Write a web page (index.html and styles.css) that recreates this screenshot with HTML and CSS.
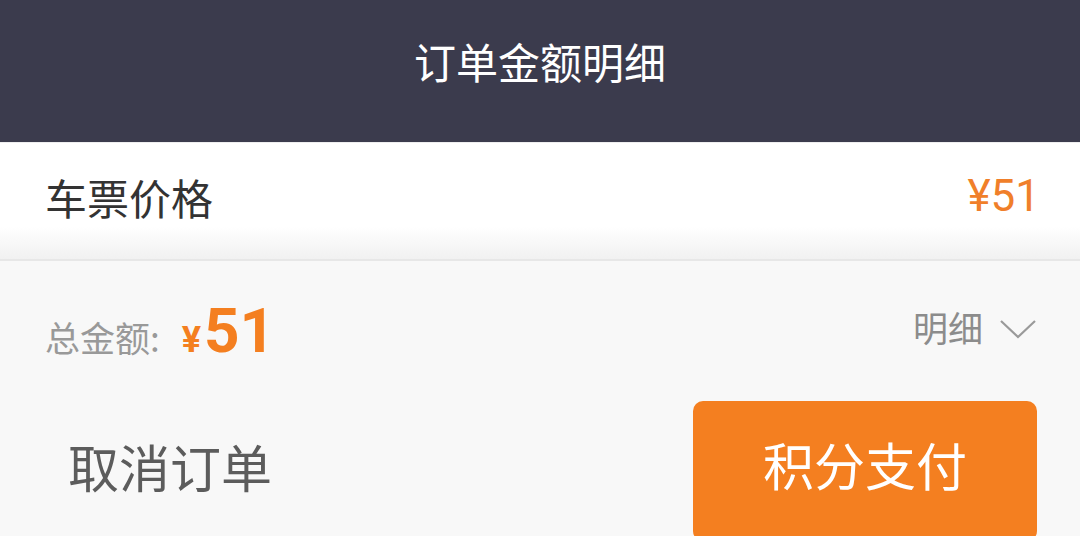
FILE: index.html
```html
<!DOCTYPE html>
<html lang="zh-CN">
<head>
    <meta charset="UTF-8">
    <meta name="viewport" content="width=device-width, initial-scale=1.0">
    <title>订单金额明细</title>
    <link rel="stylesheet" href="styles.css">
</head>
<body>
    <div class="title-bar">订单金额明细</div>

    <div class="price-row">
        <span class="price-label">车票价格</span>
        <span class="price-value">¥51</span>
    </div>

    <div class="footer">
        <div class="total-row">
            <div class="total">
                <span class="total-label">总金额:</span>
                <span class="total-yen">¥</span><span class="total-num">51</span>
            </div>
            <div class="detail-toggle">
                <span>明细</span>
                <!-- chevron down -->
                <svg class="chevron" width="38" height="20" viewBox="0 0 38 20">
                    <polyline points="2,2 19,18 36,2" fill="none" stroke="#9a9a9a" stroke-width="2.2"/>
                </svg>
            </div>
        </div>

        <div class="actions">
            <button class="cancel-btn">取消订单</button>
            <button class="pay-btn">积分支付</button>
        </div>
    </div>
</body>
</html>
```

FILE: styles.css
```css
body {
    margin: 0;
    height: 536px;
    overflow: hidden;
    font-family: "Noto Sans CJK SC", "Noto Sans", sans-serif;
    background-color: #f8f8f8;
}
.title-bar {
    height: 143px;
    display: flex;
    align-items: center;
    justify-content: center;
    background-color: #3b3b4d;
    color: #fff;
    font-size: 42px;
    border-bottom: 1px solid #eeeeef;
    padding-bottom: 22px;
    box-sizing: border-box;
}
.price-row {
    height: 118px;
    display: flex;
    align-items: center;
    justify-content: space-between;
    padding: 0 40px 10px 45px;
    box-sizing: border-box;
    background: linear-gradient(#fff 72%, #f1f1f1);
    border-bottom: 2px solid #e7e7e7;
}
.price-label {
    font-size: 42px;
    color: #333;
}
.price-value {
    font-family: Roboto, sans-serif;
    font-size: 44px;
    color: #f07f2a;
}
.footer {
    background-color: #f8f8f8;
}
.total-row {
    height: 140px;
    display: flex;
    align-items: center;
    justify-content: space-between;
    padding: 0 43px 0 45px;
}
.total {
    display: flex;
    align-items: baseline;
}
.total-label {
    font-size: 35px;
    color: #999;
    margin-right: 22px;
}
.total-yen {
    font-family: Roboto, sans-serif;
    font-weight: bold;
    font-size: 36px;
    color: #f47f20;
    margin-right: 3px;
}
.total-num {
    font-family: Roboto, sans-serif;
    font-weight: bold;
    font-size: 62px;
    line-height: 1;
    color: #f47f20;
}
.detail-toggle {
    display: flex;
    align-items: center;
    font-size: 35px;
    color: #8c8c8c;
    margin-bottom: 10px;
}
.chevron {
    margin-left: 16px;
    margin-top: 6px;
}
.actions {
    display: flex;
    align-items: flex-start;
    justify-content: space-between;
    padding: 0 43px 0 68px;
}
button {
    font-family: "Noto Sans CJK SC", "Noto Sans", sans-serif;
    border: none;
    cursor: pointer;
}
.cancel-btn {
    background: none;
    padding: 0;
    margin-top: 28px;
    font-size: 51px;
    color: #5c5c5c;
}
.pay-btn {
    width: 344px;
    height: 140px;
    border-radius: 10px;
    background-color: #f47f20;
    color: #fff;
    font-size: 51px;
    padding-bottom: 16px;
}
```
